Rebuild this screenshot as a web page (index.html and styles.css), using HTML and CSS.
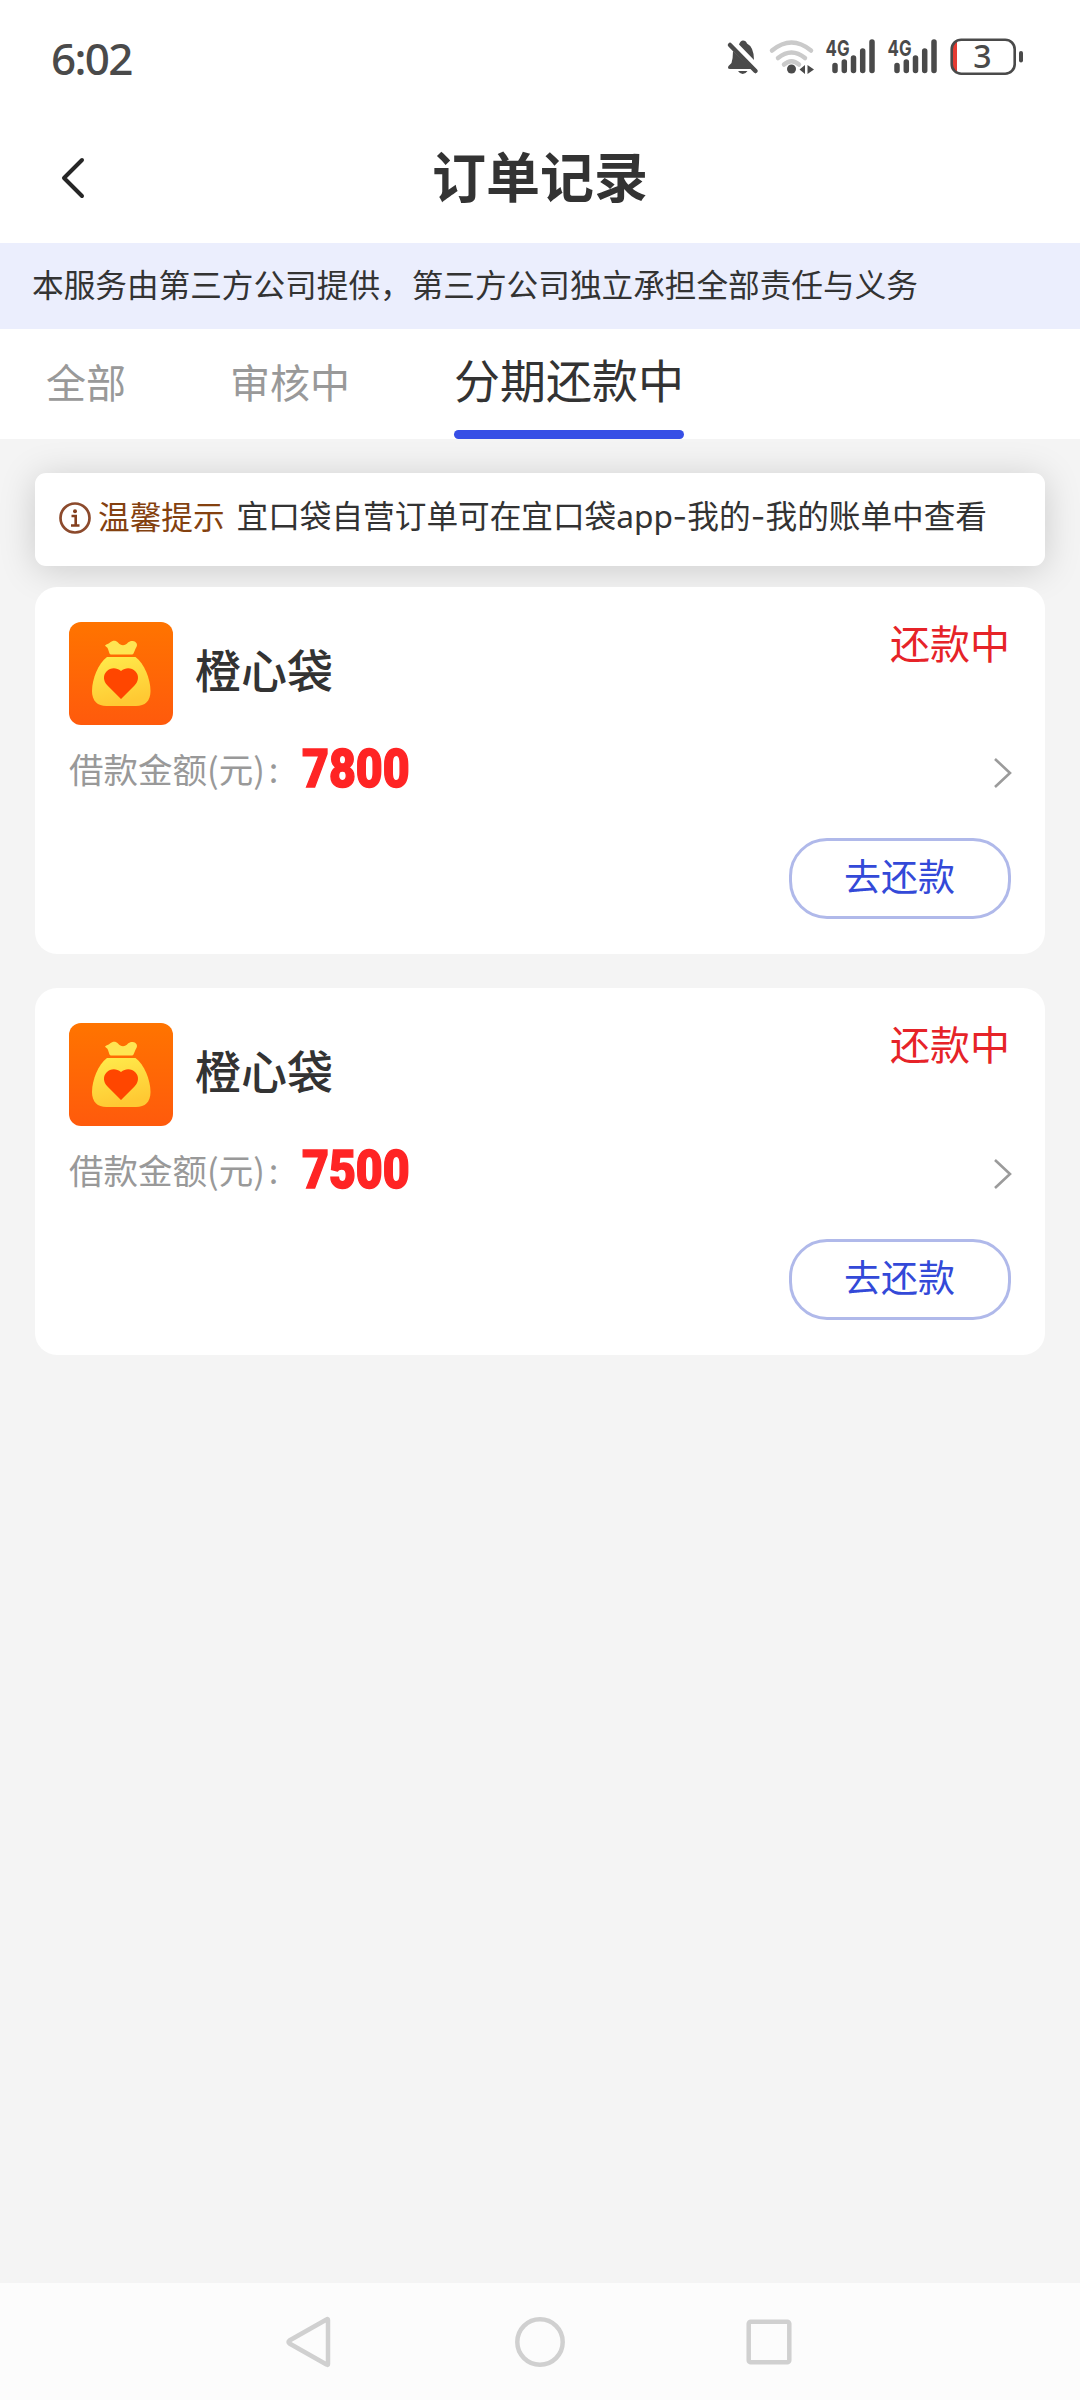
FILE: index.html
```html
<!DOCTYPE html>
<html lang="zh-CN">
<head>
<meta charset="utf-8">
<title>订单记录</title>
<link rel="stylesheet" href="styles.css">
</head>
<body>
<svg class="defs" width="0" height="0" aria-hidden="true">
  <defs>
    <linearGradient id="orange" x1="0" y1="0" x2="0" y2="1"><stop offset="0" stop-color="#ff7400"/><stop offset="1" stop-color="#ff5a0c"/></linearGradient>
    <linearGradient id="gold" x1="0" y1="0" x2="0.3" y2="1"><stop offset="0" stop-color="#ffec4c"/><stop offset="1" stop-color="#ffc933"/></linearGradient>
    <symbol id="bag" viewBox="0 0 104 103">
      <rect width="104" height="103" rx="12" fill="url(#orange)"/>
      <path fill="#ffe552" d="M36 23.5C38 21.5 39 22.5 41 20.5C44 18 47 18.500 49 20.500C52 24 56 24 59 20.500C62 17.500 68 19 68 23C68 25 66.500 26 66 28L64.500 31.500Q64 32.500 63 32.500H42Q41 32.500 40.500 31.500L39 27C38.500 25 36.500 24.500 36 23.500Z"/>
      <path fill="url(#gold)" d="M38 35H66.500C75 41 81.500 57 81.500 69C81.500 79 76 84 67 84H37.500C28.500 84 23 79 23 69C23 57 29.500 41 38 35Z"/>
      <path fill="#ff4600" d="M52 77L38.500 63.500C34 59 34 53 37.500 49.500C41.500 45.500 47 45 52 49C57 45 62.500 45.500 66.500 49.500C70 53 70 59 65.500 63.500Z"/>
    </symbol>
    <symbol id="signal" viewBox="0 0 52 40">
      <text x="0.500" y="19" class="net" textLength="24" lengthAdjust="spacingAndGlyphs">4G</text>
      <path d="M10 28.500V33.500M19.300 25V33.500M28.500 21V33.500M37.700 14V33.500M47 5V33.500" fill="none" stroke="#4a4a4a" stroke-width="5.500" stroke-linecap="round"/>
    </symbol>
  </defs>
</svg>

<header class="statusbar">
  <span class="time">6:02</span>
  <div class="indicators">
    <svg width="32" height="40" viewBox="0 0 32 40">
      <path fill="#4a4a4a" d="M6 14L25 32H3Q0 32 1.500 29L4.500 26Q6 21 6 14ZM12 7.500Q13.500 3.500 16 3.500Q19 3.500 20 6.500Q27 10 27 23ZM11 34H20.500Q18.500 37 15.700 37Q13 37 11 34Z"/>
      <path d="M3 8L28.500 34" stroke="#4a4a4a" stroke-width="4.500" stroke-linecap="round"/>
    </svg>
    <svg class="wifi" width="46" height="40" viewBox="0 0 46 40">
      <g fill="none" stroke="#cacaca" stroke-width="4.500" stroke-linecap="round"><path d="M3 13.500Q22.500-2.500 42 13.500"/><path d="M9 21Q22.500 10 36 21"/><path d="M15 27.500Q22.500 21 30 27.500"/></g>
      <circle cx="22.500" cy="32" r="4.500" fill="#4a4a4a"/>
      <path fill="#4a4a4a" d="M36 28V37L30.500 32.500ZM38.500 28L45 32.500L38.500 37Z"/>
    </svg>
    <svg class="signal" width="52" height="40"><use href="#signal"/></svg>
    <svg class="signal second" width="52" height="40"><use href="#signal"/></svg>
    <svg class="battery" width="74" height="40" viewBox="0 0 74 40">
      <path fill="#e53b32" d="M7 4V36Q3 34 3 30V10Q3 6 7 4Z"/>
      <rect x="1.700" y="2.700" width="63" height="34" rx="9.500" fill="none" stroke="#4a4a4a" stroke-width="2.600"/>
      <rect x="69" y="14" width="4" height="11.500" rx="2" fill="#4a4a4a"/>
      <text x="32.500" y="31" text-anchor="middle" class="level">3</text>
    </svg>
  </div>
</header>

<div class="titlebar">
  <svg class="back" width="30" height="46" viewBox="0 0 30 46"><path d="M24 5L6 23L24 41" fill="none" stroke="#262626" stroke-width="4" stroke-linecap="round" stroke-linejoin="round"/></svg>
  <h1>订单记录</h1>
</div>

<div class="banner">本服务由第三方公司提供，第三方公司独立承担全部责任与义务</div>

<nav class="tabs">
  <a class="tab">全部</a>
  <a class="tab">审核中</a>
  <a class="tab active">分期还款中</a>
</nav>

<main>
  <div class="notice">
    <svg width="32" height="32" viewBox="0 0 32 32"><circle cx="16" cy="16" r="14.500" fill="none" stroke="#8c4a2c" stroke-width="2.700"/><circle cx="16" cy="9.200" r="2" fill="#84401f"/><path d="M12.500 14H16.700V23M12 23.500H20.500" fill="none" stroke="#84401f" stroke-width="2.600"/></svg>
    <span class="hint">温馨提示</span>
    <span class="message">宜口袋自营订单可在宜口袋<span class="latin">app</span><span class="dash">-</span>我的<span class="dash">-</span>我的账单中查看</span>
  </div>

  <section class="card">
    <div class="head">
      <svg class="logo" width="104" height="103"><use href="#bag"/></svg>
      <h2>橙心袋</h2>
      <span class="state">还款中</span>
    </div>
    <div class="row">
      <span class="label">借款金额(元)<span class="colon">:</span></span>
      <span class="amount">7800</span>
      <svg class="chevron" width="20" height="32" viewBox="0 0 20 32"><path d="M4 2L19 16L4 30" fill="none" stroke="#9b9b9b" stroke-width="2.600"/></svg>
    </div>
    <button class="pay">去还款</button>
  </section>

  <section class="card">
    <div class="head">
      <svg class="logo" width="104" height="103"><use href="#bag"/></svg>
      <h2>橙心袋</h2>
      <span class="state">还款中</span>
    </div>
    <div class="row">
      <span class="label">借款金额(元)<span class="colon">:</span></span>
      <span class="amount">7500</span>
      <svg class="chevron" width="20" height="32" viewBox="0 0 20 32"><path d="M4 2L19 16L4 30" fill="none" stroke="#9b9b9b" stroke-width="2.600"/></svg>
    </div>
    <button class="pay">去还款</button>
  </section>
</main>

<footer class="navbar">
  <svg width="50" height="56" viewBox="0 0 50 56"><path d="M42 6V50Q42 51.500 40.500 50.500L3.500 29.500Q1.500 28 3.500 26.500L40.500 5.500Q42 4.500 42 6Z" fill="none" stroke="#d0d0d0" stroke-width="4.500"/></svg>
  <svg width="56" height="56" viewBox="0 0 56 56"><circle cx="28" cy="28" r="22.700" fill="none" stroke="#d0d0d0" stroke-width="4.500"/></svg>
  <svg width="50" height="56" viewBox="0 0 50 56"><rect x="4.700" y="7.700" width="40.600" height="40.600" rx="2" fill="none" stroke="#d0d0d0" stroke-width="4.500"/></svg>
</footer>
</body>
</html>
```
FILE: styles.css
```css
* { box-sizing: border-box; }

body {
  margin: 0;
  width: 1080px;
  height: 2400px;
  display: flex;
  flex-direction: column;
  background: #f4f4f4;
  color: #333;
  font-family: "Noto Sans CJK SC", sans-serif;
  line-height: 1;
}

svg { display: block; flex: none; overflow: visible; }
.defs { position: absolute; }

.statusbar {
  height: 113px;
  padding: 0 56px 0 51px;
  display: flex;
  justify-content: space-between;
  align-items: center;
  background: #fff;
  color: #4a4a4a;
}
.time { font: 500 44px/1 "Noto Sans", sans-serif; letter-spacing: -1.7px; padding-top: 2px; }
.indicators { display: flex; align-items: center; }
.wifi { margin-left: 10px; }
.signal { margin-left: 10px; }
.battery { margin-left: 11px; }
.net { font: 700 22px Inter, sans-serif; fill: #4a4a4a; }
.level { font: 500 32px "Noto Sans", sans-serif; fill: #4a4a4a; }

.titlebar {
  height: 130px;
  padding: 0 58px;
  display: grid;
  grid-template-columns: 30px 1fr 30px;
  align-items: center;
  background: #fff;
}
h1 { margin: 0; padding-bottom: 7px; text-align: center; font-size: 54px; font-weight: 700; line-height: 1; }

.banner {
  height: 86px;
  padding: 0 32px;
  background: #ebeefd;
  font-size: 31.65px;
  line-height: 81px;
  white-space: nowrap;
}

.tabs {
  position: relative;
  z-index: 1;
  height: 110px;
  padding-left: 46px;
  display: flex;
  background: #fff;
}
.tab { font-size: 40px; line-height: 104px; color: #999; margin-right: 104px; }
.tab.active {
  height: 110px;
  margin-right: 0;
  display: flex;
  flex-direction: column;
  justify-content: space-between;
  font-size: 46px;
  line-height: 99px;
  color: #333;
}
.tab.active::after {
  content: "";
  height: 9px;
  border-radius: 5px;
  background: #374fe6;
}

main { flex: 1; padding: 34px 35px 0; }

.notice {
  height: 93px;
  padding: 0 24px 3px;
  margin-bottom: 21px;
  display: flex;
  align-items: center;
  background: #fff;
  border-radius: 11px;
  box-shadow: 0 4px 36px rgba(0, 0, 0, .17);
  font-size: 31.65px;
  white-space: nowrap;
}
.hint, .message { padding-bottom: 4px; }
.hint { margin-left: 7px; color: #84410f; }
.message { margin-left: 12px; }
.latin { display: inline-block; width: 56px; font-family: "Noto Sans", sans-serif; }
.dash { display: inline-block; width: 15px; text-align: center; font-family: Inter, sans-serif; }

.card {
  height: 367px;
  margin-bottom: 34px;
  padding: 35px 34px 0;
  display: flex;
  flex-direction: column;
  background: #fff;
  border-radius: 22px;
  position: relative;
}
.head { height: 103px; display: flex; align-items: center; }
h2 { margin: 0 0 11px 22px; font-size: 46px; font-weight: 500; line-height: 1; }
.state { align-self: flex-start; margin: 0 1px 0 auto; font-size: 40px; color: #e62328; }
.row { height: 90px; display: flex; align-items: center; }
.label { width: 233px; padding-bottom: 3px; font-size: 34.5px; color: #999; white-space: nowrap; }
.colon { margin-left: 4px; }
.amount {
  padding-bottom: 2px;
  font: 900 54px/1 Roboto, sans-serif;
  letter-spacing: 0;
  color: #ff2424;
  -webkit-text-stroke: 1.5px #ff2424;
  transform: scaleX(.86);
  transform-origin: left;
}
.chevron { margin-left: auto; margin-top: 6px; }
.pay {
  align-self: flex-end;
  width: 222px;
  height: 81px;
  margin-top: 23px;
  padding: 0 1px 7px 0;
  border: 3px solid #b0b9ea;
  border-radius: 38px;
  background: #fff;
  color: #3349d8;
  font: 400 37px/1 "Noto Sans CJK SC", sans-serif;
}

.navbar {
  height: 117px;
  padding: 0 286px;
  display: flex;
  align-items: center;
  justify-content: space-between;
  background: #fcfcfc;
}
```
